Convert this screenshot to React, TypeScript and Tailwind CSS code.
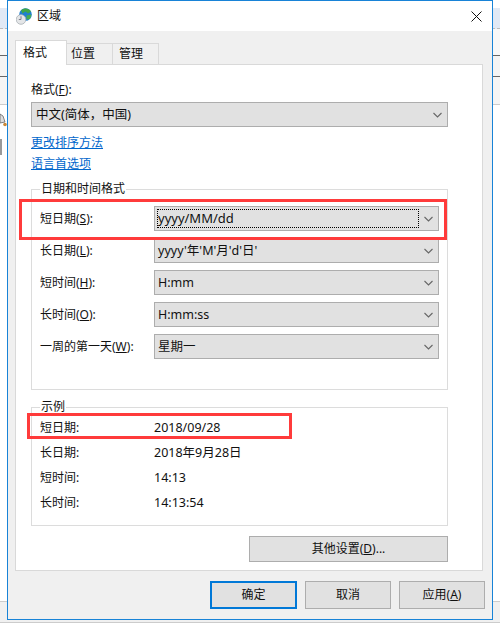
import { ReactNode } from 'react'

const font = '[font-family:"Noto_Sans","Noto_Sans_CJK_SC",sans-serif]'

const Chevron = () => (
  <svg width="9" height="6" viewBox="0 0 9 6" fill="none" stroke="#666" strokeWidth="1.1">
    <path d="M0.5 1 L4.5 5 L8.5 1" />
  </svg>
)

const Combo = ({ children, focused, className }: { children: ReactNode; focused?: boolean; className: string }) => (
  <div className={`flex h-[25px] items-center justify-between border border-[#adadad] bg-[#e1e1e1] pl-[2px] pr-[4px] text-[12.5px] text-[#111] ${className}`}>
    {focused ? (
      <span className="flex h-[19px] w-[262px] items-center border border-dotted border-black text-[13px]">{children}</span>
    ) : (
      <span className="pl-[1px] pt-[1px]">{children}</span>
    )}
    <span className="pr-px">
      <Chevron />
    </span>
  </div>
)

const FormatRow = ({ label, children, focused }: { label: ReactNode; children: ReactNode; focused?: boolean }) => (
  <div className="flex items-center">
    <div className="w-[114px] text-[12px]">{label}</div>
    <Combo focused={focused} className="w-[285px]">{children}</Combo>
  </div>
)

const SampleRow = ({ label, value }: { label: string; value: string }) => (
  <div className="flex h-[25px] items-center pt-[1px]">
    <div className="w-[114px] text-[12px]">{label}</div>
    <div className="text-[12.5px]">{value}</div>
  </div>
)

const Btn = ({ children, primary, className }: { children: ReactNode; primary?: boolean; className: string }) => (
  <button className={`flex items-center justify-center bg-[#e1e1e1] text-[12px] text-[#111] ${primary ? 'border-2 border-[#0078d7]' : 'border border-[#adadad]'} ${className}`}>
    {children}
  </button>
)

const GlobeIcon = () => (
  <svg width="16" height="17" viewBox="0 0 16 17">
    <circle cx="9.5" cy="6.5" r="6.3" fill="#1f7fd0" />
    <path d="M5 2.5 C8 -0.5 13 0 15 3.5 L12 5.5 L9.5 3.5 L6.5 5.5 Z" fill="#3fa648" />
    <path d="M10.5 7.5 L15.5 6.5 L14 11 L10.5 11.5 Z" fill="#48ad4e" />
    <circle cx="5" cy="11.5" r="4.8" fill="#e4e6e8" stroke="#a8aeb4" strokeWidth="0.8" />
    <path d="M5 8.2 V11.5 H2.8" stroke="#667" strokeWidth="0.8" fill="none" />
  </svg>
)

const App = () => {
  return (
    <div className={`relative h-[627px] w-[500px] overflow-hidden bg-white text-[#111] ${font}`}>
      {/* whatever sits behind the dialog */}
      <div className="flex h-full flex-col">
        <div className="h-[8px] shrink-0 bg-white" />
        <div className="h-[21px] shrink-0 border-b border-dashed border-[#bbb] bg-[#e1e9f5]" />
        <div className="h-[27px] shrink-0 border-b border-[#666] bg-[#f8f8f8]" />
        <div className="h-[21px] shrink-0 border-b border-[#666] bg-[#f4f4f4]" />
        <div className="h-[28px] shrink-0 border-b border-[#ccc] bg-[#f5f5f5]" />
        <div className="h-[497px] shrink-0 border-b border-[#ccc] bg-white" />
        <div className="h-[21px] shrink-0 border-b border-[#ccc] bg-[#f0f0f0]" />
      </div>
      <svg className="absolute left-0 top-[112px]" width="7" height="16" viewBox="0 0 7 16">
        <path d="M0 2 L3 4 L5 10 L0 11 Z" fill="#ddd" stroke="#666" strokeWidth="0.8" />
        <circle cx="5" cy="12.5" r="1.8" fill="#c98a3a" />
      </svg>
      <div className="absolute left-0 top-[139px] h-[16px] w-[2px] bg-[#999]" />

      {/* dialog */}
      <div className="absolute left-[7px] top-0 flex h-[620px] w-[486px] flex-col border border-[#1883d7] bg-[#f0f0f0]">
        <div className="flex h-[30px] shrink-0 items-center justify-between bg-white pl-[8px] pr-[10px]">
          <div className="flex items-center gap-[5px]">
            <GlobeIcon />
            <span className="text-[12px]">区域</span>
          </div>
          <svg width="11" height="11" viewBox="0 0 11 11" stroke="#111" strokeWidth="1">
            <path d="M0.5 0.5 L10.5 10.5 M10.5 0.5 L0.5 10.5" />
          </svg>
        </div>

        <div className="flex flex-col pl-[7px] pt-[9px]">
          <div className="relative z-10 flex h-[25px] items-end text-[12px]">
            <div className="flex h-[25px] w-[52px] items-start border border-b-0 border-[#d9d9d9] bg-white pl-[7px] pt-[3px]">格式</div>
            <div className="flex h-[22px] w-[46px] items-center border-y border-r border-[#d9d9d9] pl-[4px]">位置</div>
            <div className="flex h-[22px] w-[46px] items-center border-y border-r border-[#d9d9d9] pl-[6px]">管理</div>
          </div>

          <div className="mt-[-1px] flex h-[507px] w-[468px] flex-col border border-[#d9d9d9] bg-white pl-[15px]">
            <div className="mt-[16px] text-[12px] leading-[17px]">格式(<u>F</u>):</div>
            <Combo className="mt-[4px] w-[417px] pl-[3px]">中文(简体，中国)</Combo>
            <a className="mt-[7px] text-[12px] leading-[17px] text-[#0066cc] underline">更改排序方法</a>
            <a className="mt-[4px] text-[12px] leading-[17px] text-[#0066cc] underline">语言首选项</a>

            <fieldset className="mt-[9px] flex h-[209px] w-[417px] flex-col gap-[7px] border border-[#dcdcdc] pl-[8px] pt-[9px]">
              <legend className="px-[1px] text-[12px] leading-[16px]">日期和时间格式</legend>
              <FormatRow focused label={<>短日期(<u>S</u>):</>}>yyyy/MM/dd</FormatRow>
              <FormatRow label={<>长日期(<u>L</u>):</>}>yyyy'年'M'月'd'日'</FormatRow>
              <FormatRow label={<>短时间(<u>H</u>):</>}>H:mm</FormatRow>
              <FormatRow label={<>长时间(<u>O</u>):</>}>H:mm:ss</FormatRow>
              <FormatRow label={<>一周的第一天(<u>W</u>):</>}>星期一</FormatRow>
            </fieldset>

            <fieldset className="mt-[9px] flex h-[127px] w-[417px] flex-col border border-[#dcdcdc] pl-[8px]">
              <legend className="px-[1px] text-[12px] leading-[16px]">示例</legend>
              <SampleRow label="短日期:" value="2018/09/28" />
              <SampleRow label="长日期:" value="2018年9月28日" />
              <SampleRow label="短时间:" value="14:13" />
              <SampleRow label="长时间:" value="14:13:54" />
            </fieldset>

            <div className="mt-[10px] flex w-[417px] justify-end">
              <Btn className="h-[26px] w-[199px]">其他设置(<u>D</u>)...</Btn>
            </div>
          </div>

          <div className="mt-[10px] flex gap-[8px] pl-[195px]">
            <Btn primary className="h-[28px] w-[87px]">确定</Btn>
            <Btn className="h-[28px] w-[86px]">取消</Btn>
            <Btn className="h-[28px] w-[86px]">应用(<u>A</u>)</Btn>
          </div>
        </div>
      </div>

      {/* red annotations drawn over the screenshot */}
      <div className="absolute left-[19px] top-[199px] h-[41px] w-[428px] border-[3px] border-[#ff3b3b]" />
      <div className="absolute left-[27px] top-[413px] h-[26px] w-[265px] border-[3px] border-[#ff3b3b]" />
    </div>
  )
}

export default App
